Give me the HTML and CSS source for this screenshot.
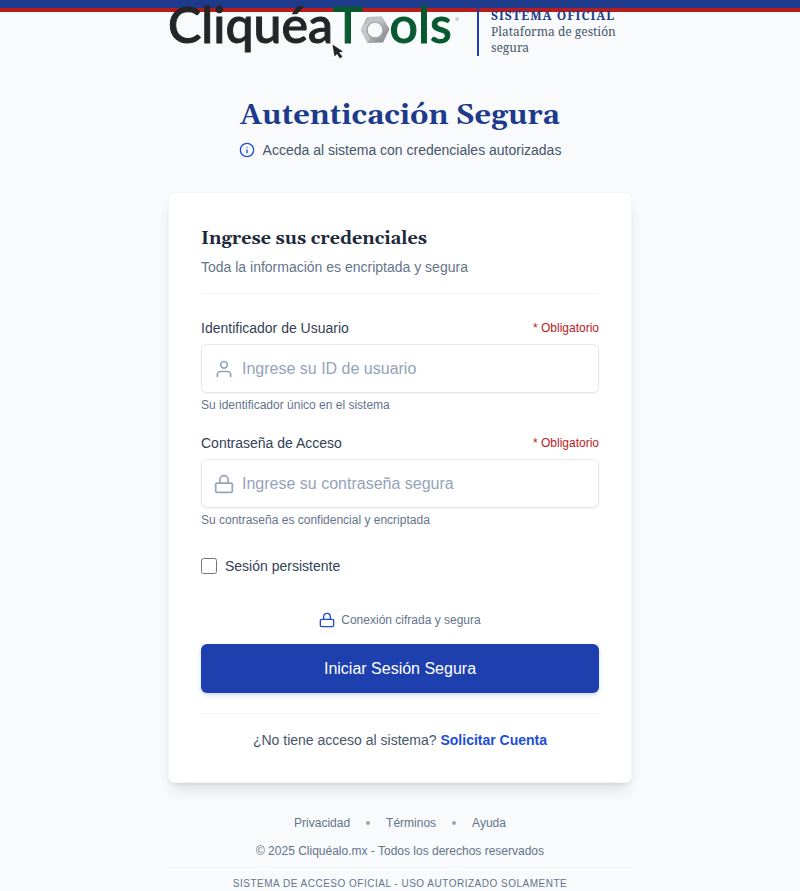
FILE: index.html
```html
<!DOCTYPE html>
<html lang="es">
<head>
<meta charset="utf-8">
<meta name="viewport" content="width=device-width, initial-scale=1">
<title>Autenticación Segura</title>
<link rel="stylesheet" href="styles.css">
</head>
<body>
<div class="topbar"></div>
<div class="page">
  <header class="brand">
    <div class="logo">
      <span>Cliquéa</span><span class="green">T</span><svg class="nut" viewBox="0 0 30 28" aria-hidden="true">
        <defs><linearGradient id="metal" x1="0" y1="0" x2="1" y2="1"><stop offset="0" stop-color="#8c8c8c"/><stop offset=".3" stop-color="#d2d2d2"/><stop offset=".6" stop-color="#aaaaaa"/><stop offset="1" stop-color="#777777"/></linearGradient></defs>
        <path fill="url(#metal)" fill-rule="evenodd" d="M7 1 22 .5 29.500 13 23 26.500 7.500 27 .5 14ZM15 6a8 8 0 1 0 0 16 8 8 0 0 0 0-16Z"/>
        <path d="M7 1 22 .5 23.500 5 15 4.500 7 6Z" fill="#c2c2c2"/>
        <path d="m1 14 5 0 4 9-2.500 3.500Z" fill="#c6c6c6"/>
        <path d="m29 13-5 2-4 8 3 3Z" fill="#999"/>
        <circle cx="15" cy="14" r="8" fill="none" stroke="#a5a5a5" stroke-width="1.500"/>
      </svg><span class="green">ols</span><span class="mark"></span>
      <svg class="cursor" viewBox="0 0 12 15" aria-hidden="true"><path fill="#252525" d="M.5.500 11 7.500 7 8.500l3.500 4-2.500 2-3-4.500-2.500 2.500Z"/></svg>
    </div>
    <div class="official">
      <strong>SISTEMA OFICIAL</strong>
      <span>Plataforma de gestión segura</span>
    </div>
  </header>
  <main>
    <h1>Autenticación Segura</h1>
    <p class="lead">
      <svg class="icon16" viewBox="0 0 24 24" aria-hidden="true"><circle cx="12" cy="12" r="10"/><path d="M12 16v-4M12 8h.01"/></svg>
      Acceda al sistema con credenciales autorizadas
    </p>
    <form class="card">
      <div class="card-head">
        <h2>Ingrese sus credenciales</h2>
        <p>Toda la información es encriptada y segura</p>
      </div>
      <div class="field">
        <div class="field-top"><label for="user">Identificador de Usuario</label><span class="required">* Obligatorio</span></div>
        <div class="control">
          <svg viewBox="0 0 24 24" aria-hidden="true"><path d="M20 21v-2a4 4 0 0 0-4-4H8a4 4 0 0 0-4 4v2"/><circle cx="12" cy="7" r="4"/></svg>
          <input id="user" type="text" placeholder="Ingrese su ID de usuario">
        </div>
        <p class="hint">Su identificador único en el sistema</p>
      </div>
      <div class="field">
        <div class="field-top"><label for="pass">Contraseña de Acceso</label><span class="required">* Obligatorio</span></div>
        <div class="control">
          <svg viewBox="0 0 24 24" aria-hidden="true"><rect x="2" y="11" width="20" height="11" rx="2"/><path d="M7 11V7a5 5 0 0 1 10 0v4"/></svg>
          <input id="pass" type="password" placeholder="Ingrese su contraseña segura">
        </div>
        <p class="hint">Su contraseña es confidencial y encriptada</p>
      </div>
      <label class="remember"><input type="checkbox">Sesión persistente</label>
      <p class="secure">
        <svg class="icon16" viewBox="0 0 24 24" aria-hidden="true"><rect x="2" y="11" width="20" height="11" rx="2"/><path d="M7 11V7a5 5 0 0 1 10 0v4"/></svg>
        Conexión cifrada y segura
      </p>
      <button type="submit">Iniciar Sesión Segura</button>
      <p class="signup">¿No tiene acceso al sistema? <a href="#">Solicitar Cuenta</a></p>
    </form>
  </main>
  <footer>
    <nav><a href="#">Privacidad</a><i></i><a href="#">Términos</a><i></i><a href="#">Ayuda</a></nav>
    <p class="copy">© 2025 Cliquéalo.mx - Todos los derechos reservados</p>
    <p class="notice">SISTEMA DE ACCESO OFICIAL - USO AUTORIZADO SOLAMENTE</p>
  </footer>
</div>
</body>
</html>
```
FILE: styles.css
```css
* { box-sizing: border-box; }
body {
  margin: 0;
  background: #f8fafc;
  color: #475569;
  font: 14px/20px "Liberation Sans", Arial, sans-serif;
}
h1, h2, p { margin: 0; }
a { color: inherit; text-decoration: none; }
svg { flex: none; }

.topbar {
  position: absolute;
  inset: 0 0 auto;
  height: 12px;
  background: #1e3a8a;
  border-bottom: 4px solid #b91c1c;
}
.page {
  position: relative;
  max-width: 496px;
  margin: 0 auto;
  padding: 0 16px;
}

.brand { display: flex; align-items: flex-end; height: 56px; }
.logo {
  position: relative;
  display: flex;
  align-items: flex-start;
  width: 309px;
  height: 56px;
  color: #252525;
  font: 500 50px/48px Lato, sans-serif;
  -webkit-text-stroke: 1px currentColor;
  white-space: nowrap;
}
.green { color: #07592f; }
.nut { width: 30px; height: 28px; margin: 16px 0 0 -3px; }
.mark { width: 4px; height: 4px; margin: 17px 0 0 3px; border-radius: 50%; background: #cbd5d0; }
.cursor { position: absolute; left: 164px; top: 44px; width: 12px; height: 15px; }
.official {
  flex: 1;
  border-left: 2px solid #1e40af;
  padding-left: 12px;
  font: 12px/16px "Noto Serif", "DejaVu Serif Condensed", serif;
}
.official strong { display: block; color: #1e3a8a; letter-spacing: 1px; }
.official span { display: block; }

h1 {
  margin-top: 42px;
  color: #1e3a8a;
  font: bold 29px/36px Georgia, Gelasio, serif;
  text-align: center;
}
.lead {
  display: flex;
  align-items: center;
  justify-content: center;
  gap: 8px;
  margin: 6px 0 32px;
}
.icon16, .control svg { fill: none; stroke: #1d4ed8; stroke-width: 2; stroke-linecap: round; stroke-linejoin: round; }
.icon16 { width: 16px; height: 16px; }

.card {
  padding: 32px;
  background: #fff;
  border: 1px solid #f1f5f9;
  border-radius: 6px;
  box-shadow: 0 10px 15px -3px rgba(0, 0, 0, .1), 0 4px 6px -4px rgba(0, 0, 0, .1);
}
.card-head { padding-bottom: 16px; margin-bottom: 24px; border-bottom: 1px solid #f1f5f9; }
h2 { margin-bottom: 4px; color: #1e293b; font: bold 18px/28px Georgia, Gelasio, serif; }
.card-head p { color: #64748b; }
.field { margin-bottom: 20px; }
.field-top { display: flex; align-items: center; justify-content: space-between; margin-bottom: 6px; color: #334155; }
.required { color: #b91c1c; font-size: 12px; }
.control {
  display: flex;
  align-items: center;
  gap: 8px;
  height: 49px;
  padding: 0 12px;
  border: 1px solid #e2e8f0;
  border-radius: 6px;
  box-shadow: 0 1px 2px rgba(0, 0, 0, .06);
}
.control svg { width: 20px; height: 20px; stroke: #94a3b8; }
.control input { flex: 1; min-width: 0; padding: 0; border: 0; outline: 0; background: none; color: #1e293b; font: 16px/24px "Liberation Sans", Arial, sans-serif; }
.control input::placeholder { color: #94a3b8; opacity: 1; }
.hint { margin-top: 4px; color: #64748b; font-size: 12px; line-height: 16px; }
.remember { display: flex; align-items: center; gap: 8px; margin-top: 28px; color: #334155; }
.remember input { width: 16px; height: 16px; margin: 0; }
.secure { display: flex; align-items: center; justify-content: center; gap: 6px; margin: 36px 0 16px; color: #64748b; font-size: 12px; line-height: 16px; }
button {
  display: block;
  width: 100%;
  height: 49px;
  border: 0;
  border-radius: 6px;
  background: #1e40af;
  color: #fff;
  font: 16px/24px "Liberation Sans", Arial, sans-serif;
  box-shadow: 0 2px 4px rgba(30, 64, 175, .2);
}
.signup { margin-top: 20px; padding-top: 16px; border-top: 1px solid #f1f5f9; text-align: center; }
.signup a { color: #1d4ed8; font-weight: bold; }

footer { padding-top: 32px; color: #64748b; font-size: 12px; line-height: 16px; text-align: center; }
nav { display: flex; align-items: center; justify-content: center; gap: 16px; }
nav i { width: 4px; height: 4px; border-radius: 50%; background: #94a3b8; }
.copy { margin: 12px 0 8px; }
.notice { padding-top: 8px; border-top: 1px solid #f1f5f9; font-size: 10px; letter-spacing: 0.05em; }
```
